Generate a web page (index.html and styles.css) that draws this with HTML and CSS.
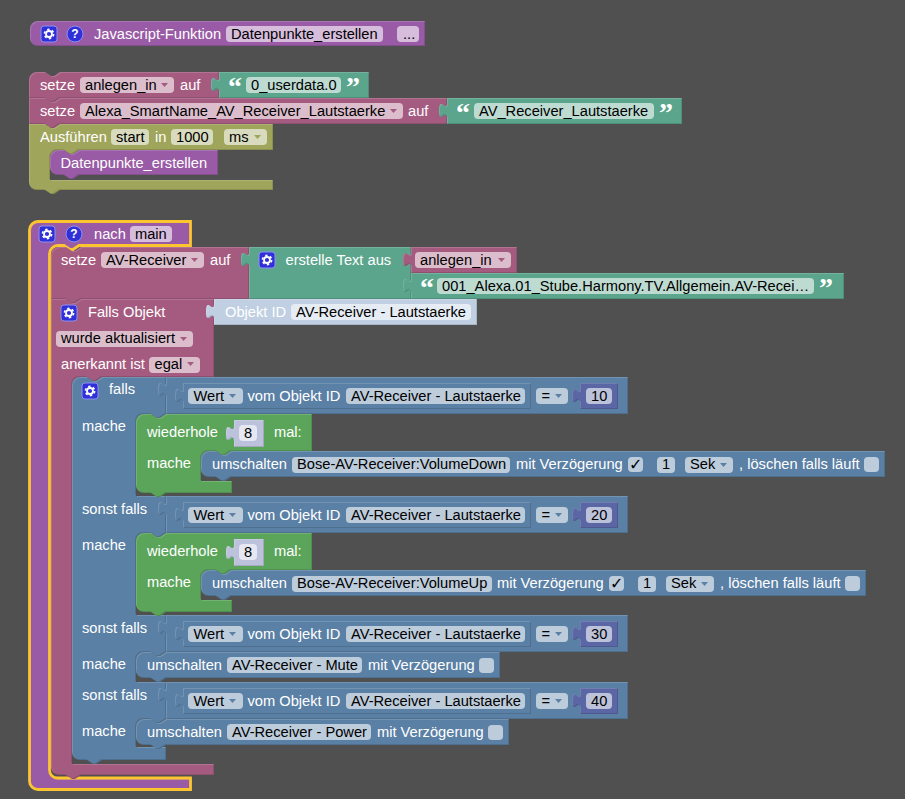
FILE: index.html
```html
<!DOCTYPE html>
<html lang="de">
<head>
<meta charset="utf-8">
<title>Blockly</title>
<link rel="stylesheet" href="styles.css">
</head>
<body>
<svg class="canvas" width="905" height="799" viewBox="0 0 905 799" xmlns="http://www.w3.org/2000/svg">
<defs>
  <filter id="bevel" x="-2%" y="-5%" width="104%" height="110%" color-interpolation-filters="sRGB">
    <feOffset in="SourceAlpha" dx="1" dy="1" result="o1"/>
    <feComposite in="SourceAlpha" in2="o1" operator="out" result="tl"/>
    <feFlood flood-color="#fff" flood-opacity=".15"/>
    <feComposite in2="tl" operator="in" result="light"/>
    <feOffset in="SourceAlpha" dx="-1" dy="-1" result="o2"/>
    <feComposite in="SourceAlpha" in2="o2" operator="out" result="br"/>
    <feFlood flood-color="#000" flood-opacity=".13"/>
    <feComposite in2="br" operator="in" result="dark"/>
    <feMerge><feMergeNode in="SourceGraphic"/><feMergeNode in="light"/><feMergeNode in="dark"/></feMerge>
  </filter>
  <symbol id="gear" width="18" height="18" viewBox="0 0 18 18">
    <rect class="gear-box" x="1" y="1" width="16" height="16" rx="3"/>
    <circle class="gear-ring" cx="9" cy="9" r="3"/>
    <circle class="gear-teeth" cx="9" cy="9" r="4.6"/>
  </symbol>
  <symbol id="help" width="18" height="18" viewBox="0 0 18 18">
    <circle class="help-disc" cx="9" cy="9" r="8"/>
    <text class="help-mark" x="9" y="13">?</text>
  </symbol>
</defs>

<!-- Javascript-Funktion -->
<path class="b purple" d="M30,29 a8,8 0 0 1 8,-8 H425 V46 H38 a8,8 0 0 1 -8,-8 Z"/>
<use href="#gear" x="40" y="25"/>
<use href="#help" x="66" y="25"/>
<text class="t" x="94" y="39">Javascript-Funktion</text>
<rect class="f" x="226" y="26" width="157" height="16" rx="4"/>
<text class="k" x="231" y="39">Datenpunkte_erstellen</text>
<rect class="f" x="397" y="26" width="22" height="16" rx="4"/>
<text class="k" x="403" y="39">...</text>

<!-- setze anlegen_in -->
<path class="b red" d="M29,80 a8,8 0 0 1 8,-8 H45 l6,4 h3 l6,-4 H219 V98 H60 l-6,4 h-3 l-6,-4 H29 Z"/>
<path class="b teal" d="M219,72 H369 V98 H219 V92 c0,-10 -8,8 -8,-7.5 s8,2.5 8,-7.5 Z"/>
<text class="t" x="40" y="90">setze</text>
<rect class="f" x="80" y="77" width="94" height="16" rx="4"/>
<text class="k" x="85" y="90">anlegen_in</text>
<path class="ar a-red" d="M161,83 h7 l-3.5,4 z"/>
<text class="t" x="180" y="90">auf</text>
<text class="q" x="228" y="96">“</text>
<rect class="f" x="246" y="77" width="95" height="16" rx="4"/>
<text class="k" x="251" y="90">0_userdata.0</text>
<text class="q" x="346" y="96">”</text>

<!-- setze Alexa_SmartName -->
<path class="b red" d="M29,98 H45 l6,4 h3 l6,-4 H447 V124 H60 l-6,4 h-3 l-6,-4 H29 Z"/>
<path class="b teal" d="M447,98 H682 V124 H447 V118 c0,-10 -8,8 -8,-7.5 s8,2.5 8,-7.5 Z"/>
<text class="t" x="40" y="116">setze</text>
<rect class="f" x="80" y="103" width="323" height="16" rx="4"/>
<text class="k" x="85" y="116">Alexa_SmartName_AV_Receiver_Lautstaerke</text>
<path class="ar a-red" d="M390,109 h7 l-3.5,4 z"/>
<text class="t" x="408" y="116">auf</text>
<text class="q" x="456" y="122">“</text>
<rect class="f" x="474" y="103" width="180" height="16" rx="4"/>
<text class="k" x="479" y="116">AV_Receiver_Lautstaerke</text>
<text class="q" x="659" y="122">”</text>

<!-- Ausführen -->
<path class="b olive" d="M29,124 H45 l6,4 h3 l6,-4 H273 V150 H79 l-6,4 h-3 l-6,-4 H58 a8,8 0 0 0 -8,8 V180 H273 V190 H60 l-6,4 h-3 l-6,-4 H37 a8,8 0 0 1 -8,-8 Z"/>
<path class="b purple" d="M50,158 a8,8 0 0 1 8,-8 H64 l6,4 h3 l6,-4 H218 V175 H79 l-6,4 h-3 l-6,-4 H58 a8,8 0 0 1 -8,-8 Z"/>
<text class="t" x="40" y="142">Ausführen</text>
<rect class="f" x="111" y="129" width="38" height="16" rx="4"/>
<text class="k" x="116" y="142">start</text>
<text class="t" x="155" y="142">in</text>
<rect class="f" x="171" y="129" width="42" height="16" rx="4"/>
<text class="k" x="176" y="142">1000</text>
<rect class="f" x="224" y="129" width="43" height="16" rx="4"/>
<text class="k" x="229" y="142">ms</text>
<path class="ar a-olive" d="M254,135 h7 l-3.5,4 z"/>
<text class="t" x="60.5" y="168">Datenpunkte_erstellen</text>

<!-- nach main -->
<path class="b purple" d="M30,230 a8,8 0 0 1 8,-8 H190 V246 H79 l-6,4 h-3 l-6,-4 H58 a8,8 0 0 0 -8,8 V771 a8,8 0 0 0 8,8 H190 V790 H38 a8,8 0 0 1 -8,-8 Z"/>
<path class="sel" d="M29.5,230 a8.5,8.5 0 0 1 8.5,-8.5 H190.5 V245.5 H79 l-6,4 h-3 l-6,-4 H58 a8.5,8.5 0 0 0 -8.5,8.5 V770 a8,8 0 0 0 8,8 H190.5 V789.5 H38 a8.5,8.5 0 0 1 -8.5,-8.5 Z"/>
<use href="#gear" x="38" y="225"/>
<use href="#help" x="65" y="225"/>
<text class="t" x="94" y="239">nach</text>
<rect class="f" x="130" y="226" width="42" height="16" rx="4"/>
<text class="k" x="135" y="239">main</text>

<!-- setze AV-Receiver -->
<path class="b red" d="M51,255 a8,8 0 0 1 8,-8 H66 l6,4 h3 l6,-4 H249 V299 H81 l-6,4 h-3 l-6,-4 H51 Z"/>
<text class="t" x="61" y="265">setze</text>
<rect class="f" x="101" y="252" width="103" height="16" rx="4"/>
<text class="k" x="106" y="265">AV-Receiver</text>
<path class="ar a-red" d="M191,258 h7 l-3.5,4 z"/>
<text class="t" x="210" y="265">auf</text>
<path class="b teal" d="M249,247 H411 V299 H249 V267 c0,-10 -8,8 -8,-7.5 s8,2.5 8,-7.5 Z"/>
<use href="#gear" x="258" y="251"/>
<text class="t" x="285.5" y="265">erstelle Text aus</text>
<path class="b red" d="M411,247 H517 V273 H411 V267 c0,-10 -8,8 -8,-7.5 s8,2.5 8,-7.5 Z"/>
<rect class="f" x="415" y="252" width="96" height="16" rx="4"/>
<text class="k" x="420" y="265">anlegen_in</text>
<path class="ar a-red" d="M498,258 h7 l-3.5,4 z"/>
<path class="b teal" d="M411,273 H844 V299 H411 V293 c0,-10 -8,8 -8,-7.5 s8,2.5 8,-7.5 Z"/>
<text class="q" x="420" y="297">“</text>
<rect class="f" x="437" y="278" width="377" height="16" rx="4"/>
<text class="k" x="442" y="291">001_Alexa.01_Stube.Harmony.TV.Allgemein.AV-Recei…</text>
<text class="q" x="819" y="297">”</text>

<!-- Falls Objekt -->
<path class="b red" d="M51,299 H66 l6,4 h3 l6,-4 H214 V377 H102 l-6,4 h-3 l-6,-4 H80 a8,8 0 0 0 -8,8 V764 H214 V775 H81 l-6,4 h-3 l-6,-4 H59 a8,8 0 0 1 -8,-8 Z"/>
<use href="#gear" x="60" y="304"/>
<text class="t" x="88" y="317">Falls Objekt</text>
<path class="b steel" d="M214,299 H477 V325 H214 V319 c0,-10 -8,8 -8,-7.5 s8,2.5 8,-7.5 Z"/>
<text class="t" x="225" y="317">Objekt ID</text>
<rect class="f" x="291" y="304" width="180" height="16" rx="4"/>
<text class="k" x="296" y="317">AV-Receiver - Lautstaerke</text>
<rect class="f" x="56" y="331" width="137" height="16" rx="4"/>
<text class="k" x="61" y="343">wurde aktualisiert</text>
<path class="ar a-red" d="M180,337 h7 l-3.5,4 z"/>
<text class="t" x="61" y="369">anerkannt ist</text>
<rect class="f" x="149" y="357" width="51" height="16" rx="4"/>
<text class="k" x="154.5" y="369">egal</text>
<path class="ar a-red" d="M187,362 h7 l-3.5,4 z"/>

<!-- falls / sonst falls -->
<path class="b blue" d="M72,385 a8,8 0 0 1 8,-8 H87 l6,4 h3 l6,-4 H166 V414 l-6,4 h-3 l-6,-4 H144 a8,8 0 0 0 -8,8 V496 H166 V533 l-6,4 h-3 l-6,-4 H144 a8,8 0 0 0 -8,8 V615 H166 V652 l-6,4 h-3 l-6,-4 H144 a8,8 0 0 0 -8,8 V682 H166 V719 l-6,4 h-3 l-6,-4 H144 a8,8 0 0 0 -8,8 V747 H166 V760 H102 l-6,4 h-3 l-6,-4 H80 a8,8 0 0 1 -8,-8 Z"/>
<use href="#gear" x="81" y="382"/>
<text class="t" x="109" y="394">falls</text>
<text class="t" x="82" y="431">mache</text>
<text class="t" x="82" y="514">sonst falls</text>
<text class="t" x="82" y="550">mache</text>
<text class="t" x="82" y="633">sonst falls</text>
<text class="t" x="82" y="669">mache</text>
<text class="t" x="82" y="700">sonst falls</text>
<text class="t" x="82" y="736">mache</text>

<!-- condition 1 -->
<path class="b blue" d="M166,377 H628 V414 H166 V397 c0,-10 -8,8 -8,-7.5 s8,2.5 8,-7.5 Z"/>
<path class="b blue" d="M183,383 H531 V409 H183 V403 c0,-10 -8,8 -8,-7.5 s8,2.5 8,-7.5 Z"/>
<rect class="f" x="188" y="388" width="55" height="16" rx="4"/>
<text class="k" x="193.5" y="401">Wert</text>
<path class="ar a-blue" d="M229,394 h7 l-3.5,4 z"/>
<text class="t" x="247.5" y="401">vom Objekt ID</text>
<rect class="f" x="346" y="388" width="179" height="16" rx="4"/>
<text class="k" x="351" y="401">AV-Receiver - Lautstaerke</text>
<rect class="f" x="536" y="388" width="32" height="16" rx="4"/>
<text class="k" x="541.5" y="401">=</text>
<path class="ar a-blue" d="M555,394 h7 l-3.5,4 z"/>
<path class="b indigo" d="M580,383 H618 V409 H580 V403 c0,-10 -8,8 -8,-7.5 s8,2.5 8,-7.5 Z"/>
<rect class="f" x="586" y="388" width="26" height="16" rx="4"/>
<text class="k" x="591" y="401">10</text>

<!-- wiederhole 1 -->
<path class="b green" d="M136,422 a8,8 0 0 1 8,-8 H151 l6,4 h3 l6,-4 H312 V451 H231 l-6,4 h-3 l-6,-4 H209 a8,8 0 0 0 -8,8 V481 H232 V493 H166 l-6,4 h-3 l-6,-4 H144 a8,8 0 0 1 -8,-8 Z"/>
<text class="t" x="147" y="437">wiederhole</text>
<path class="b pale" d="M234,420 H264 V447 H234 V441 c0,-10 -8,8 -8,-7.5 s8,2.5 8,-7.5 Z"/>
<rect class="f" x="239" y="425" width="18" height="16" rx="4"/>
<text class="k" x="244" y="438">8</text>
<text class="t" x="274" y="437">mal:</text>
<text class="t" x="147" y="468">mache</text>
<path class="b blue" d="M201,459 a8,8 0 0 1 8,-8 H216 l6,4 h3 l6,-4 H885 V477 H231 l-6,4 h-3 l-6,-4 H209 a8,8 0 0 1 -8,-8 Z"/>
<text class="t" x="212" y="469">umschalten</text>
<rect class="f" x="292" y="457" width="218" height="16" rx="4"/>
<text class="k" x="297" y="469">Bose-AV-Receiver:VolumeDown</text>
<text class="t" x="516" y="469">mit Verzögerung</text>
<rect class="f" x="628" y="457" width="15" height="15" rx="4"/>
<text class="c" x="629" y="470">✓</text>
<rect class="f" x="657" y="457" width="18" height="16" rx="4"/>
<text class="k" x="662" y="469">1</text>
<rect class="f" x="685" y="457" width="48" height="16" rx="4"/>
<text class="k" x="690" y="469">Sek</text>
<path class="ar a-blue" d="M720,463 h7 l-3.5,4 z"/>
<text class="t" x="739" y="469">, löschen falls läuft</text>
<rect class="f" x="864" y="457" width="15" height="15" rx="4"/>

<!-- condition 2 -->
<path class="b blue" d="M166,496 H628 V533 H166 V516 c0,-10 -8,8 -8,-7.5 s8,2.5 8,-7.5 Z"/>
<path class="b blue" d="M183,502 H531 V528 H183 V522 c0,-10 -8,8 -8,-7.5 s8,2.5 8,-7.5 Z"/>
<rect class="f" x="188" y="507" width="55" height="16" rx="4"/>
<text class="k" x="193.5" y="520">Wert</text>
<path class="ar a-blue" d="M229,513 h7 l-3.5,4 z"/>
<text class="t" x="247.5" y="520">vom Objekt ID</text>
<rect class="f" x="346" y="507" width="179" height="16" rx="4"/>
<text class="k" x="351" y="520">AV-Receiver - Lautstaerke</text>
<rect class="f" x="536" y="507" width="32" height="16" rx="4"/>
<text class="k" x="541.5" y="520">=</text>
<path class="ar a-blue" d="M555,513 h7 l-3.5,4 z"/>
<path class="b indigo" d="M580,502 H618 V528 H580 V522 c0,-10 -8,8 -8,-7.5 s8,2.5 8,-7.5 Z"/>
<rect class="f" x="586" y="507" width="26" height="16" rx="4"/>
<text class="k" x="591" y="520">20</text>

<!-- wiederhole 2 -->
<path class="b green" d="M136,541 a8,8 0 0 1 8,-8 H151 l6,4 h3 l6,-4 H312 V570 H231 l-6,4 h-3 l-6,-4 H209 a8,8 0 0 0 -8,8 V600 H232 V612 H166 l-6,4 h-3 l-6,-4 H144 a8,8 0 0 1 -8,-8 Z"/>
<text class="t" x="147" y="556">wiederhole</text>
<path class="b pale" d="M234,539 H264 V566 H234 V560 c0,-10 -8,8 -8,-7.5 s8,2.5 8,-7.5 Z"/>
<rect class="f" x="239" y="544" width="18" height="16" rx="4"/>
<text class="k" x="244" y="557">8</text>
<text class="t" x="274" y="556">mal:</text>
<text class="t" x="147" y="587">mache</text>
<path class="b blue" d="M201,578 a8,8 0 0 1 8,-8 H216 l6,4 h3 l6,-4 H866 V596 H231 l-6,4 h-3 l-6,-4 H209 a8,8 0 0 1 -8,-8 Z"/>
<text class="t" x="212" y="588">umschalten</text>
<rect class="f" x="292" y="576" width="200" height="16" rx="4"/>
<text class="k" x="297" y="588">Bose-AV-Receiver:VolumeUp</text>
<text class="t" x="497" y="588">mit Verzögerung</text>
<rect class="f" x="609" y="576" width="15" height="15" rx="4"/>
<text class="c" x="610" y="589">✓</text>
<rect class="f" x="638" y="576" width="18" height="16" rx="4"/>
<text class="k" x="643" y="588">1</text>
<rect class="f" x="666" y="576" width="48" height="16" rx="4"/>
<text class="k" x="671" y="588">Sek</text>
<path class="ar a-blue" d="M701,582 h7 l-3.5,4 z"/>
<text class="t" x="720" y="588">, löschen falls läuft</text>
<rect class="f" x="845" y="576" width="15" height="15" rx="4"/>

<!-- condition 3 -->
<path class="b blue" d="M166,615 H628 V652 H166 V635 c0,-10 -8,8 -8,-7.5 s8,2.5 8,-7.5 Z"/>
<path class="b blue" d="M183,621 H531 V647 H183 V641 c0,-10 -8,8 -8,-7.5 s8,2.5 8,-7.5 Z"/>
<rect class="f" x="188" y="626" width="55" height="16" rx="4"/>
<text class="k" x="193.5" y="639">Wert</text>
<path class="ar a-blue" d="M229,632 h7 l-3.5,4 z"/>
<text class="t" x="247.5" y="639">vom Objekt ID</text>
<rect class="f" x="346" y="626" width="179" height="16" rx="4"/>
<text class="k" x="351" y="639">AV-Receiver - Lautstaerke</text>
<rect class="f" x="536" y="626" width="32" height="16" rx="4"/>
<text class="k" x="541.5" y="639">=</text>
<path class="ar a-blue" d="M555,632 h7 l-3.5,4 z"/>
<path class="b indigo" d="M580,621 H618 V647 H580 V641 c0,-10 -8,8 -8,-7.5 s8,2.5 8,-7.5 Z"/>
<rect class="f" x="586" y="626" width="26" height="16" rx="4"/>
<text class="k" x="591" y="639">30</text>

<!-- umschalten Mute -->
<path class="b blue" d="M136,660 a8,8 0 0 1 8,-8 H151 l6,4 h3 l6,-4 H500 V678 H166 l-6,4 h-3 l-6,-4 H144 a8,8 0 0 1 -8,-8 Z"/>
<text class="t" x="147" y="670">umschalten</text>
<rect class="f" x="227" y="657" width="135" height="16" rx="4"/>
<text class="k" x="232" y="670">AV-Receiver - Mute</text>
<text class="t" x="368" y="670">mit Verzögerung</text>
<rect class="f" x="479" y="658" width="15" height="15" rx="4"/>

<!-- condition 4 -->
<path class="b blue" d="M166,682 H628 V719 H166 V702 c0,-10 -8,8 -8,-7.5 s8,2.5 8,-7.5 Z"/>
<path class="b blue" d="M183,688 H531 V714 H183 V708 c0,-10 -8,8 -8,-7.5 s8,2.5 8,-7.5 Z"/>
<rect class="f" x="188" y="693" width="55" height="16" rx="4"/>
<text class="k" x="193.5" y="706">Wert</text>
<path class="ar a-blue" d="M229,699 h7 l-3.5,4 z"/>
<text class="t" x="247.5" y="706">vom Objekt ID</text>
<rect class="f" x="346" y="693" width="179" height="16" rx="4"/>
<text class="k" x="351" y="706">AV-Receiver - Lautstaerke</text>
<rect class="f" x="536" y="693" width="32" height="16" rx="4"/>
<text class="k" x="541.5" y="706">=</text>
<path class="ar a-blue" d="M555,699 h7 l-3.5,4 z"/>
<path class="b indigo" d="M580,688 H618 V714 H580 V708 c0,-10 -8,8 -8,-7.5 s8,2.5 8,-7.5 Z"/>
<rect class="f" x="586" y="693" width="26" height="16" rx="4"/>
<text class="k" x="591" y="706">40</text>

<!-- umschalten Power -->
<path class="b blue" d="M136,727 a8,8 0 0 1 8,-8 H151 l6,4 h3 l6,-4 H509 V745 H166 l-6,4 h-3 l-6,-4 H144 a8,8 0 0 1 -8,-8 Z"/>
<text class="t" x="147" y="737">umschalten</text>
<rect class="f" x="227" y="724" width="144" height="16" rx="4"/>
<text class="k" x="232" y="737">AV-Receiver - Power</text>
<text class="t" x="377" y="737">mit Verzögerung</text>
<rect class="f" x="488" y="725" width="15" height="15" rx="4"/>
</svg>
</body>
</html>
```

FILE: styles.css
```css
html, body {
  margin: 0;
  padding: 0;
  background: #505050;
  overflow: hidden;
}
.canvas {
  display: block;
  font-family: "Liberation Sans", Arial, sans-serif;
  font-size: 14.67px;
}
.b { filter: url(#bevel); }
.purple { fill: #995ba5; }
.red { fill: #a55b80; }
.teal { fill: #5ba58c; }
.olive { fill: #9fa55b; }
.blue { fill: #5b80a5; }
.green { fill: #5ba55b; }
.indigo { fill: #5b67a5; }
.steel { fill: #c0d0e2; }
.pale { fill: #bdc2dc; }
.f { fill: #fff; fill-opacity: .6; }
.t { fill: #fff; }
.k { fill: #000; }
.q {
  fill: #fff;
  font-family: "Liberation Serif", serif;
  font-weight: bold;
  font-size: 28px;
}
.c {
  fill: #000;
  font-family: "DejaVu Sans", sans-serif;
  font-size: 16px;
  font-weight: bold;
}
.a-red { fill: #a55b80; }
.a-olive { fill: #9fa55b; }
.a-blue { fill: #5b80a5; }
.sel {
  fill: none;
  stroke: #fcc52f;
  stroke-width: 2.8px;
}
.gear-box { fill: #3030d8; stroke: #8f8ff0; stroke-width: 1px; }
.gear-ring { fill: none; stroke: #fff; stroke-width: 1.8px; }
.gear-teeth { fill: none; stroke: #fff; stroke-width: 1.6px; stroke-dasharray: 2.4 2.42; }
.help-disc { fill: #3030d8; stroke: #8f8ff0; stroke-width: 1px; }
.help-mark { fill: #fff; font-weight: bold; font-size: 12px; text-anchor: middle; }
```
